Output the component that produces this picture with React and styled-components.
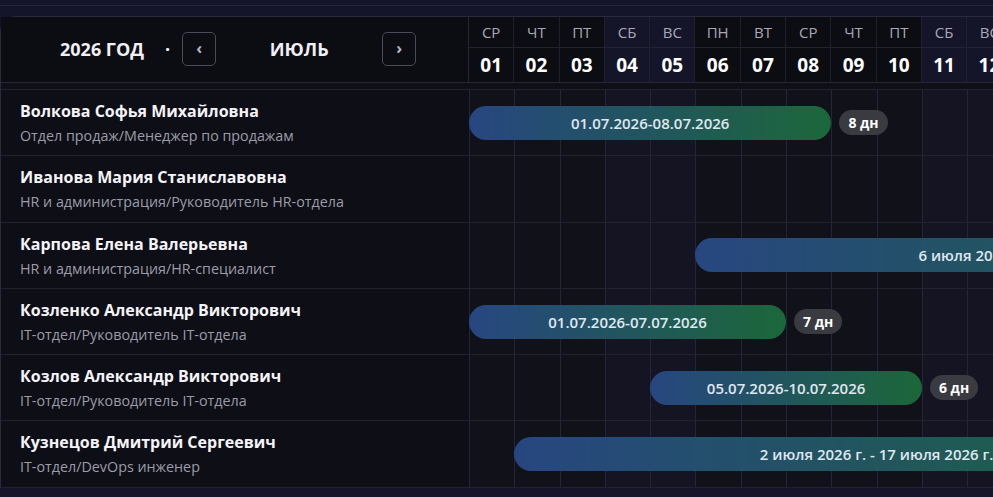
import styled, { createGlobalStyle } from "styled-components";

const DAY_W = 45.3;
const LEFT_W = 468;
const DAYS = 31;
const WEEKDAYS = ["СР", "ЧТ", "ПТ", "СБ", "ВС", "ПН", "ВТ"];

const GlobalStyle = createGlobalStyle`
  html, body {
    margin: 0;
    padding: 0;
    background: #0d0d15;
    overflow: hidden;
  }
  body {
    font-family: "Open Sans", "Noto Sans", sans-serif;
    color: #f0f0f4;
  }
`;

const Page = styled.div`
  width: 993px;
  height: 497px;
  overflow: hidden;
  background: #14142a;
`;

const TopStrip = styled.div`
  height: 5px;
  border-bottom: 1px solid #25253e;
  margin-bottom: 10px;
`;

const Panel = styled.div`
  width: ${LEFT_W + DAY_W * DAYS}px;
  background: #0e0e16;
  border: 1px solid #2a2a3e;
  border-bottom: none;
  border-radius: 16px 0 0 0;
`;

const HeaderRow = styled.div`
  display: flex;
  height: 65px;
  border-bottom: 1px solid #262636;
`;

const HeaderLeft = styled.div`
  width: ${LEFT_W - 1}px;
  flex-shrink: 0;
  display: flex;
  align-items: center;
  padding: 0 0 1px 59px;
  box-sizing: border-box;
  background: #0c0c13;
`;

const YearLabel = styled.span`
  font-size: 18px;
  font-weight: 700;
`;

const Dot = styled.span`
  font-size: 18px;
  font-weight: 700;
  margin: 0 12px 0 21px;
`;

const NavButton = styled.button`
  width: 34px;
  height: 34px;
  border: 1px solid #4a4a58;
  border-radius: 5px;
  background: transparent;
  color: #b8b8c4;
  font-family: inherit;
  font-size: 16px;
  font-weight: 700;
  display: flex;
  align-items: center;
  justify-content: center;
  padding: 0 0 3px;
`;

const MonthLabel = styled.span`
  width: 166px;
  text-align: center;
  font-size: 18px;
  font-weight: 700;
`;

const DaysHeader = styled.div`
  display: grid;
  grid-template-columns: repeat(${DAYS}, ${DAY_W}px);
  border-left: 1px solid #262636;
`;

const DayHead = styled.div`
  display: grid;
  grid-template-rows: 31px 34px;
  background: ${({ $weekend }) => ($weekend ? "#15152a" : "#0c0c13")};
  border-right: 1px solid #1f1f2e;
`;

const WeekdayCell = styled.div`
  display: flex;
  align-items: center;
  justify-content: center;
  font-size: 15px;
  color: #a8a8b6;
  border-bottom: 1px solid #222232;
`;

const DateCell = styled.div`
  display: flex;
  align-items: center;
  justify-content: center;
  font-size: 19px;
  font-weight: 700;
  color: #ffffff;
`;

const Spacer = styled.div`
  height: 6px;
  border-bottom: 1px solid #222230;
  background: #0f0f18;
`;

const Row = styled.div`
  display: flex;
  height: 66.3px;
  box-sizing: border-box;
  border-bottom: 1px solid #22222f;
`;

const PersonCell = styled.div`
  width: ${LEFT_W}px;
  flex-shrink: 0;
  box-sizing: border-box;
  padding: 9px 0 0 19px;
  background: #0e0e16;
`;

const PersonName = styled.div`
  font-size: 16px;
  font-weight: 700;
  color: #f4f4f8;
  line-height: 24px;
`;

const PersonRole = styled.div`
  font-size: 14.3px;
  color: #9c9ca8;
  line-height: 26px;
`;

const Timeline = styled.div`
  display: grid;
  grid-template-columns: repeat(${DAYS}, ${DAY_W}px);
  grid-template-rows: 100%;
  align-items: center;
  background: #11111a;
`;

const DayCell = styled.div`
  grid-row: 1;
  align-self: stretch;
  border-left: 1px solid #24243a;
  background: ${({ $weekend }) => ($weekend ? "#141422" : "transparent")};
`;

const Bar = styled.div`
  grid-row: 1;
  height: 34px;
  border-radius: 17px;
  background: linear-gradient(90deg, #284884 0%, #1c6a3b 100%);
  opacity: 0.97;
  display: flex;
  align-items: center;
  justify-content: center;
  font-size: 15px;
  font-weight: 600;
  color: #e6eef8;
  white-space: nowrap;
  z-index: 1;
`;

const Badge = styled.div`
  grid-row: 1;
  justify-self: start;
  margin-left: 8px;
  height: 25px;
  padding: 0 9px;
  border-radius: 13px;
  background: #3a3a41;
  display: flex;
  align-items: center;
  font-size: 14px;
  font-weight: 700;
  color: #ffffff;
  white-space: nowrap;
  z-index: 1;
`;

const people = [
  {
    name: "Волкова Софья Михайловна",
    role: "Отдел продаж/Менеджер по продажам",
    start: 1,
    end: 8,
    label: "01.07.2026-08.07.2026",
  },
  {
    name: "Иванова Мария Станиславовна",
    role: "HR и администрация/Руководитель HR-отдела",
  },
  {
    name: "Карпова Елена Валерьевна",
    role: "HR и администрация/HR-специалист",
    start: 6,
    end: 20,
    label: "6 июля 2026 г. - 20 июля 2026 г.",
  },
  {
    name: "Козленко Александр Викторович",
    role: "IT-отдел/Руководитель IT-отдела",
    start: 1,
    end: 7,
    label: "01.07.2026-07.07.2026",
  },
  {
    name: "Козлов Александр Викторович",
    role: "IT-отдел/Руководитель IT-отдела",
    start: 5,
    end: 10,
    label: "05.07.2026-10.07.2026",
  },
  {
    name: "Кузнецов Дмитрий Сергеевич",
    role: "IT-отдел/DevOps инженер",
    start: 2,
    end: 17,
    label: "2 июля 2026 г. - 17 июля 2026 г.",
  },
];

const days = Array.from({ length: DAYS }, (_, i) => {
  const weekday = WEEKDAYS[i % 7];
  return {
    num: String(i + 1).padStart(2, "0"),
    weekday,
    weekend: weekday === "СБ" || weekday === "ВС",
  };
});

export default function App() {
  return (
    <Page>
      <GlobalStyle />
      <TopStrip />
      <Panel>
        <HeaderRow>
          <HeaderLeft>
            <YearLabel>2026 ГОД</YearLabel>
            <Dot>·</Dot>
            <NavButton>‹</NavButton>
            <MonthLabel>ИЮЛЬ</MonthLabel>
            <NavButton>›</NavButton>
          </HeaderLeft>
          <DaysHeader>
            {days.map((d) => (
              <DayHead key={d.num} $weekend={d.weekend}>
                <WeekdayCell>{d.weekday}</WeekdayCell>
                <DateCell>{d.num}</DateCell>
              </DayHead>
            ))}
          </DaysHeader>
        </HeaderRow>
        <Spacer />
        {people.map((p) => (
          <Row key={p.name}>
            <PersonCell>
              <PersonName>{p.name}</PersonName>
              <PersonRole>{p.role}</PersonRole>
            </PersonCell>
            <Timeline>
              {days.map((d, i) => (
                <DayCell
                  key={d.num}
                  $weekend={d.weekend}
                  style={{ gridColumn: i + 1 }}
                />
              ))}
              {p.start && (
                <Bar style={{ gridColumn: `${p.start} / ${p.end + 1}` }}>
                  {p.label}
                </Bar>
              )}
              {p.start && p.end - p.start < 10 && (
                <Badge style={{ gridColumn: `${p.end + 1} / span 3` }}>
                  {p.end - p.start + 1} дн
                </Badge>
              )}
            </Timeline>
          </Row>
        ))}
      </Panel>
    </Page>
  );
}
